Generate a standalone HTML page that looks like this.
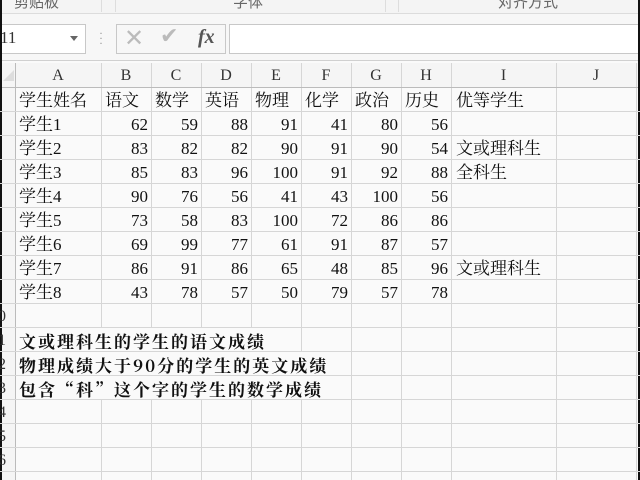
<!DOCTYPE html><html><head><meta charset="utf-8"><style>
html,body{margin:0;width:640px;height:480px;overflow:hidden;}
body{background:#fafafa;position:relative;font-family:"Liberation Serif","Noto Serif CJK SC",serif;}
.a{position:absolute}
.c{position:absolute;height:24px;line-height:25px;font-size:17px;color:#111;white-space:nowrap}
.r{text-align:right}
.vl{position:absolute;width:1px;background:#d6d6d6}
.hl{position:absolute;height:1px;background:#d6d6d6}
.h{position:absolute;top:63px;height:24px;line-height:26px;text-align:center;font-size:16px;color:#333}
.b{font-family:"Noto Serif CJK SC","Noto Sans CJK SC",serif;font-weight:bold;font-size:17px;letter-spacing:2px}
</style></head><body>
<div class="a" style="left:0;top:0;width:640px;height:13px;background:#f4f4f4;border-bottom:1px solid #dcdcdc"></div>
<div class="a" style="left:14px;top:-9px;font-size:15px;color:#666;font-family:'Noto Sans CJK SC',sans-serif">剪贴板</div>
<div class="a" style="left:233px;top:-9px;font-size:15px;color:#666;font-family:'Noto Sans CJK SC',sans-serif">字体</div>
<div class="a" style="left:498px;top:-9px;font-size:15px;color:#666;font-family:'Noto Sans CJK SC',sans-serif">对齐方式</div>
<div class="a" style="left:101px;top:0;width:1px;height:12px;background:#ddd"></div>
<div class="a" style="left:115px;top:0;width:1px;height:12px;background:#ddd"></div>
<div class="a" style="left:385px;top:0;width:1px;height:12px;background:#ddd"></div>
<div class="a" style="left:398px;top:0;width:1px;height:12px;background:#ddd"></div>
<div class="a" style="left:0;top:14px;width:640px;height:46px;background:#f7f7f7;border-bottom:1px solid #d0d0d0"></div>
<div class="a" style="left:-1px;top:24px;width:85px;height:28px;border:1px solid #c8c8c8;background:#fff"></div>
<div class="a" style="left:0;top:28px;font-size:17px;color:#333">11</div>
<div class="a" style="left:70px;top:36px;width:0;height:0;border-left:4px solid transparent;border-right:4px solid transparent;border-top:5px solid #666"></div>
<div class="a" style="left:99px;top:31px;color:#999;font-size:12px;line-height:5px">·<br>·<br>·</div>
<div class="a" style="left:116px;top:24px;width:108px;height:28px;border:1px solid #c8c8c8;background:#f7f7f7"></div>
<div class="a" style="left:124px;top:24px;font-size:24px;color:#bbb;font-family:'DejaVu Sans'">✕</div>
<div class="a" style="left:160px;top:24px;font-size:22px;color:#bbb;font-family:'DejaVu Sans'">✔</div>
<div class="a" style="left:198px;top:26px;font-size:20px;color:#555;font-style:italic;font-weight:bold">fx</div>
<div class="a" style="left:229px;top:24px;width:408px;height:28px;border:1px solid #c8c8c8;background:#fff"></div>
<div class="a" style="left:0;top:63px;width:640px;height:24px;background:#f5f5f5"></div>
<div class="a" style="left:0;top:63px;width:15px;height:417px;background:#f5f5f5"></div>
<div class="a" style="left:3px;top:70px;width:0;height:0;border-left:11px solid transparent;border-bottom:11px solid #ddd"></div>
<div class="h" style="left:15px;width:86px">A</div><div class="h" style="left:101px;width:50px">B</div><div class="h" style="left:151px;width:50px">C</div><div class="h" style="left:201px;width:50px">D</div><div class="h" style="left:251px;width:50px">E</div><div class="h" style="left:301px;width:50px">F</div><div class="h" style="left:351px;width:50px">G</div><div class="h" style="left:401px;width:50px">H</div><div class="h" style="left:451px;width:105px">I</div><div class="h" style="left:556px;width:80px">J</div>
<div class="vl" style="left:15px;top:63px;height:417px;background:#bbb"></div>
<div class="vl" style="left:101px;top:63px;height:417px"></div><div class="vl" style="left:151px;top:63px;height:417px"></div><div class="vl" style="left:201px;top:63px;height:417px"></div><div class="vl" style="left:251px;top:63px;height:417px"></div><div class="vl" style="left:301px;top:63px;height:417px"></div><div class="vl" style="left:351px;top:63px;height:417px"></div><div class="vl" style="left:401px;top:63px;height:417px"></div><div class="vl" style="left:451px;top:63px;height:417px"></div><div class="vl" style="left:556px;top:63px;height:417px"></div><div class="vl" style="left:636px;top:63px;height:417px"></div>
<div class="hl" style="left:0;top:87px;width:640px;background:#bbb"></div>
<div class="a" style="left:0;top:0;width:2px;height:480px;background:#111"></div>
<div class="a" style="left:638px;top:0;width:2px;height:480px;background:#111"></div>
<div id="g"></div>
<div class="c" style="left:19px;top:88px">学生姓名</div><div class="c" style="left:105px;top:88px">语文</div><div class="c" style="left:155px;top:88px">数学</div><div class="c" style="left:205px;top:88px">英语</div><div class="c" style="left:255px;top:88px">物理</div><div class="c" style="left:305px;top:88px">化学</div><div class="c" style="left:355px;top:88px">政治</div><div class="c" style="left:405px;top:88px">历史</div><div class="c" style="left:456px;top:88px">优等学生</div>
<script>
var d=[[62,59,88,91,41,80,56,""],[83,82,82,90,91,90,54,"文或理科生"],[85,83,96,100,91,92,88,"全科生"],[90,76,56,41,43,100,56,""],[73,58,83,100,72,86,86,""],[69,99,77,61,91,87,57,""],[86,91,86,65,48,85,96,"文或理科生"],[43,78,57,50,79,57,78,""]];
var h="";for(var r=1;r<=16;r++){h+='<div class="hl" style="left:0;top:'+(87+24*r)+'px;width:640px"></div>';if(r>=10)h+='<div class="c" style="left:-2px;top:'+(64+24*r)+'px;font-size:16px;color:#333">'+(r%10)+'</div>';}
d.forEach(function(row,i){var t=88+24*(i+1);h+='<div class="c" style="left:19px;top:'+t+'px">学生'+(i+1)+'</div>';for(var j=0;j<7;j++){h+='<div class="c r" style="left:'+(101+50*j)+'px;width:47px;top:'+t+'px">'+row[j]+'</div>';}if(row[7])h+='<div class="c" style="left:456px;top:'+t+'px">'+row[7]+'</div>';});
var b=["文或理科生的学生的语文成绩","物理成绩大于90分的学生的英文成绩","包含“科”这个字的学生的数学成绩"];
b.forEach(function(s,i){var t=88+24*(10+i);h+='<div class="c b" style="left:19px;top:'+t+'px;background:#fafafa;height:23px;padding-right:2px">'+s+'</div>';});
document.getElementById("g").innerHTML=h;
</script>
</body></html>
